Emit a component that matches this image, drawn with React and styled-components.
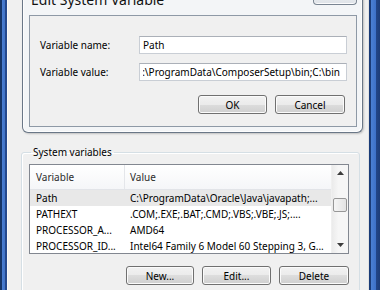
import styled, { createGlobalStyle } from "styled-components";

const GlobalStyle = createGlobalStyle`
	html, body {
		margin: 0;
		padding: 0;
		background: #f0f0f0;
	}
	body {
		font-family: "Noto Sans", "Liberation Sans", sans-serif;
		font-size: 10px;
		color: #000;
	}
`;

const Screen = styled.div`
	width: 380px;
	height: 290px;
	overflow: hidden;
	display: flex;
`;

const LeftBorder = styled.div`
	flex: none;
	width: 7px;
	background: linear-gradient(
		to right,
		#163566 0,
		#163566 2px,
		#4a7ed2 2px,
		#3f72c6 5px,
		#24488c 5px,
		#24488c 7px
	);
`;

const RightBorder = styled.div`
	flex: none;
	width: 11px;
	background: linear-gradient(
		to right,
		#1a3b78 0,
		#1a3b78 2px,
		#4b80d4 2px,
		#3c70c8 7px,
		#22468a 7px,
		#1d3c78 11px
	);
`;

const WindowBody = styled.div`
	flex: 1;
	display: flex;
	flex-direction: column;
	background: #f0f0f0;
	border-left: 1px solid #fafafa;
	border-right: 1px solid #e2e2e2;
`;

const Dialog = styled.div`
	margin: -10px 0 0 14px;
	width: 341px;
	box-sizing: border-box;
	border: 1px solid #6a7787;
	border-top: none;
	border-radius: 0 0 6px 6px;
	background: #f3f5f7;
	box-shadow: inset 1px 0 0 #fdfdfe, inset -1px -1px 0 #fdfdfe, 1px 1px 2px rgba(0, 0, 0, 0.2);
	padding: 0 5px 5px 6px;
`;

const TitleBar = styled.div`
	display: flex;
	align-items: flex-start;
	height: 25px;
`;

const Title = styled.div`
	font-size: 14px;
	line-height: 16px;
	padding: 2px 0 0 2px;
	color: #111;
	white-space: nowrap;
`;

const CloseButton = styled.div`
	margin-left: auto;
	width: 44px;
	height: 15px;
	box-sizing: border-box;
	border: 1px solid #7a8592;
	border-top: none;
	border-radius: 0 0 4px 4px;
	background: linear-gradient(#eef0f3, #dfe3e8);
	box-shadow: inset 0 -1px 0 #fbfbfc;
	display: flex;
	align-items: flex-end;
	justify-content: center;
	padding-bottom: 2px;
`;

const Client = styled.div`
	height: 112px;
	box-sizing: border-box;
	border: 1px solid #8e99a6;
	background: #f0f0f0;
	padding: 20px 10px 0 10px;
`;

const FieldGrid = styled.div`
	display: grid;
	grid-template-columns: 99px 208px;
	row-gap: 9px;
	align-items: center;
`;

const Label = styled.div`
	line-height: 18px;
`;

const TextBox = styled.div`
	height: 18px;
	box-sizing: border-box;
	border: 1px solid #c9ced5;
	border-top-color: #abb0b8;
	background: #fff;
	padding: 0 6px 0 3px;
	display: flex;
	align-items: center;
`;

const TextClip = styled.div`
	flex: 1;
	overflow: hidden;
	white-space: nowrap;
	display: flex;
	justify-content: ${(p) => (p.$end ? "flex-end" : "flex-start")};
`;

const ButtonRow = styled.div`
	display: flex;
	justify-content: flex-end;
	gap: ${(p) => p.$gap || 8}px;
	margin-top: ${(p) => p.$top}px;
	padding-right: ${(p) => p.$right || 0}px;
`;

const Button = styled.div`
	width: ${(p) => p.$w}px;
	height: 19px;
	box-sizing: border-box;
	border: 1px solid #707070;
	border-radius: 3px;
	background: linear-gradient(#f2f2f2 0%, #ebebeb 50%, #dddddd 50%, #cfcfcf 100%);
	box-shadow: inset 0 0 0 1px #fbfbfb;
	display: flex;
	align-items: center;
	justify-content: center;
	line-height: 1;
`;

const Group = styled.fieldset`
	margin: 13px 0 0 13px;
	width: 339px;
	box-sizing: border-box;
	border: 1px solid #d5dfe5;
	border-radius: 3px;
	box-shadow: inset 1px 1px 0 #fff;
	padding: 6px 10px 20px 7px;
	min-width: 0;
`;

const Legend = styled.legend`
	padding: 0 2px;
	margin-left: 2px;
	line-height: 12px;
`;

const ListView = styled.div`
	height: 90px;
	box-sizing: border-box;
	border: 1px solid #828790;
	background: #fff;
	display: flex;
	overflow: hidden;
`;

const ListBody = styled.div`
	flex: 1;
	min-width: 0;
`;

const Row = styled.div`
	display: grid;
	grid-template-columns: 95px 1fr;
	height: ${(p) => (p.$header ? 24 : 16)}px;
	align-items: center;
	background: ${(p) => (p.$header ? "linear-gradient(#ffffff, #f5f6f8)" : p.$selected ? "#e8e8e8" : "#fff")};
	border-bottom: ${(p) => (p.$header ? "1px solid #e2e4e8" : "none")};
	color: ${(p) => (p.$header ? "#2b2b2b" : "#000")};
`;

const Cell = styled.div`
	white-space: nowrap;
	overflow: hidden;
	padding-left: ${(p) => (p.$first ? 6 : 5)}px;
	height: 100%;
	display: flex;
	align-items: center;
	border-right: ${(p) => (p.$divider ? "1px solid #e4e6ea" : "none")};
`;

const ScrollBar = styled.div`
	flex: none;
	width: 16px;
	display: flex;
	flex-direction: column;
	background: linear-gradient(to right, #ebebeb, #f6f6f6 40%, #f6f6f6);
	border-left: 1px solid #f0f0f0;
`;

const ScrollArrow = styled.div`
	height: 16px;
	display: flex;
	align-items: center;
	justify-content: center;
`;

const ScrollThumb = styled.div`
	margin: ${(p) => p.$top}px 1px 0 1px;
	height: 14px;
	box-sizing: border-box;
	border: 1px solid #979797;
	border-radius: 2px;
	background: linear-gradient(to right, #f5f5f5, #e3e3e3);
`;

const Spacer = styled.div`
	flex: 1;
`;

const Arrow = ({ up }) => (
	<svg width="7" height="4" viewBox="0 0 7 4">
		<path d={up ? "M0 4 L3.5 0 L7 4 Z" : "M0 0 L3.5 4 L7 0 Z"} fill="#3c3c3c" />
	</svg>
);

const rows = [
	["Path", "C:\\ProgramData\\Oracle\\Java\\javapath;..."],
	["PATHEXT", ".COM;.EXE;.BAT;.CMD;.VBS;.VBE;.JS;...."],
	["PROCESSOR_A...", "AMD64"],
	["PROCESSOR_ID...", "Intel64 Family 6 Model 60 Stepping 3, G..."],
];

const App = () => {
	return (
		<>
			<GlobalStyle />
			<Screen>
				<LeftBorder />
				<WindowBody>
					<Dialog>
						<TitleBar>
							<Title>Edit System Variable</Title>
							<CloseButton>
								<svg width="10" height="8" viewBox="0 0 10 8">
									<path d="M1 -3 L8 4 M9 -3 L2 4" stroke="#555c66" strokeWidth="2" fill="none" />
								</svg>
							</CloseButton>
						</TitleBar>
						<Client>
							<FieldGrid>
								<Label>Variable name:</Label>
								<TextBox>
									<TextClip>Path</TextClip>
								</TextBox>
								<Label>Variable value:</Label>
								<TextBox>
									<TextClip $end>C:\ProgramData\ComposerSetup\bin;C:\bin</TextClip>
								</TextBox>
							</FieldGrid>
							<ButtonRow $top={14} $right={1}>
								<Button $w={69}>OK</Button>
								<Button $w={70}>Cancel</Button>
							</ButtonRow>
						</Client>
					</Dialog>
					<Group>
						<Legend>System variables</Legend>
						<ListView>
							<ListBody>
								<Row $header>
									<Cell $first $divider>Variable</Cell>
									<Cell>Value</Cell>
								</Row>
								{rows.map(([name, value], i) => (
									<Row key={name} $selected={i === 0}>
										<Cell $first>{name}</Cell>
										<Cell>{value}</Cell>
									</Row>
								))}
							</ListBody>
							<ScrollBar>
								<ScrollArrow>
									<Arrow up />
								</ScrollArrow>
								<ScrollThumb $top={17} />
								<Spacer />
								<ScrollArrow>
									<Arrow />
								</ScrollArrow>
							</ScrollBar>
						</ListView>
						<ButtonRow $top={12} $gap={8}>
							<Button $w={68}>New...</Button>
							<Button $w={69}>Edit...</Button>
							<Button $w={70}>Delete</Button>
						</ButtonRow>
					</Group>
				</WindowBody>
				<RightBorder />
			</Screen>
		</>
	);
};

export default App;
